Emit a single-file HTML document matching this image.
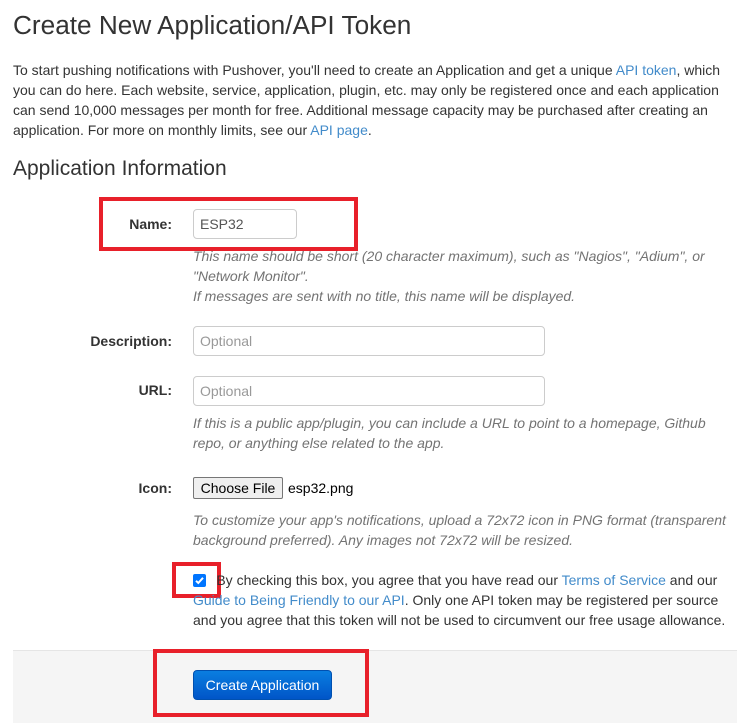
<!DOCTYPE html>
<html><head><style>
body{margin:0;width:750px;height:722px;overflow:hidden;background:#fff;font-family:"Liberation Sans",Arial,sans-serif;color:#333;font-size:14px;position:relative}
.a{position:absolute;white-space:nowrap}
a{color:#428bca;text-decoration:none}
.lbl{font-weight:bold;text-align:right;width:172px;left:0}
.inp{position:absolute;border:1px solid #ccc;border-radius:4px;background:#fff;box-sizing:border-box;font-size:14px;padding:0 0 0 6px;line-height:28px}
.hint{font-style:italic;color:#737373;font-size:14px;line-height:20px}
.red{position:absolute;border:4px solid #e8202a;box-sizing:border-box}
</style></head><body>
<div class="a" style="left:13px;top:7px;font-size:26.2px;line-height:36px">Create New Application/API Token</div>
<div class="a" style="left:13px;top:60px;line-height:20px">To start pushing notifications with Pushover, you'll need to create an Application and get a unique <a>API token</a>, which<br>you can do here. Each website, service, application, plugin, etc. may only be registered once and each application<br>can send 10,000 messages per month for free. Additional message capacity may be purchased after creating an<br>application. For more on monthly limits, see our <a>API page</a>.</div>
<div class="a" style="left:13px;top:156px;font-size:21px;line-height:26px">Application Information</div>

<div class="a lbl" style="top:216px">Name:</div>
<div class="inp" style="left:193px;top:209px;width:104px;height:30px;color:#555">ESP32</div>
<div class="red" style="left:99px;top:197px;width:259px;height:54px"></div>
<div class="a hint" style="left:193px;top:246px">This name should be short (20 character maximum), such as "Nagios", "Adium", or<br>"Network Monitor".<br>If messages are sent with no title, this name will be displayed.</div>

<div class="a lbl" style="top:333px">Description:</div>
<div class="inp" style="left:193px;top:326px;width:352px;height:30px;color:#999">Optional</div>
<div class="a lbl" style="top:382px">URL:</div>
<div class="inp" style="left:193px;top:376px;width:352px;height:30px;color:#999">Optional</div>
<div class="a hint" style="left:193px;top:413px">If this is a public app/plugin, you can include a URL to point to a homepage, Github<br>repo, or anything else related to the app.</div>

<div class="a lbl" style="top:480px">Icon:</div>
<div class="a" style="left:193px;top:477px;width:90px;height:22px;box-sizing:border-box;border:1px solid #767676;border-radius:2px;background:#efefef;font-size:14px;line-height:20px;text-align:center;color:#000">Choose File</div>
<div class="a" style="left:288px;top:480px;color:#000">esp32.png</div>
<div class="a hint" style="left:193px;top:510px">To customize your app's notifications, upload a 72x72 icon in PNG format (transparent<br>background preferred). Any images not 72x72 will be resized.</div>

<div class="a" style="left:193px;top:574px;width:13px;height:13px;background:#0075ff;border-radius:2px"><svg width="13" height="13" viewBox="0 0 13 13"><path d="M3 6.8 L5.3 9 L10 3.8" stroke="#fff" stroke-width="2" fill="none"/></svg></div>
<div class="red" style="left:172px;top:562px;width:49px;height:36px"></div>
<div class="a" style="left:193px;top:570px;line-height:20px">&nbsp;&nbsp;&nbsp;&nbsp;&nbsp;&nbsp;By checking this box, you agree that you have read our <a>Terms of Service</a> and our<br><a>Guide to Being Friendly to our API</a>. Only one API token may be registered per source<br>and you agree that this token will not be used to circumvent our free usage allowance.</div>

<div class="a" style="left:13px;top:650px;width:724px;height:72px;background:#f5f5f5;border-top:1px solid #e5e5e5"></div>
<div class="a" style="left:193px;top:670px;width:139px;height:30px;border-radius:4px;background:linear-gradient(#0a7ee0,#0055c8);border:1px solid #0050b0;box-sizing:border-box;color:#fff;text-align:center;line-height:28px">Create Application</div>
<div class="red" style="left:153px;top:649px;width:216px;height:68px"></div>
</body></html>
